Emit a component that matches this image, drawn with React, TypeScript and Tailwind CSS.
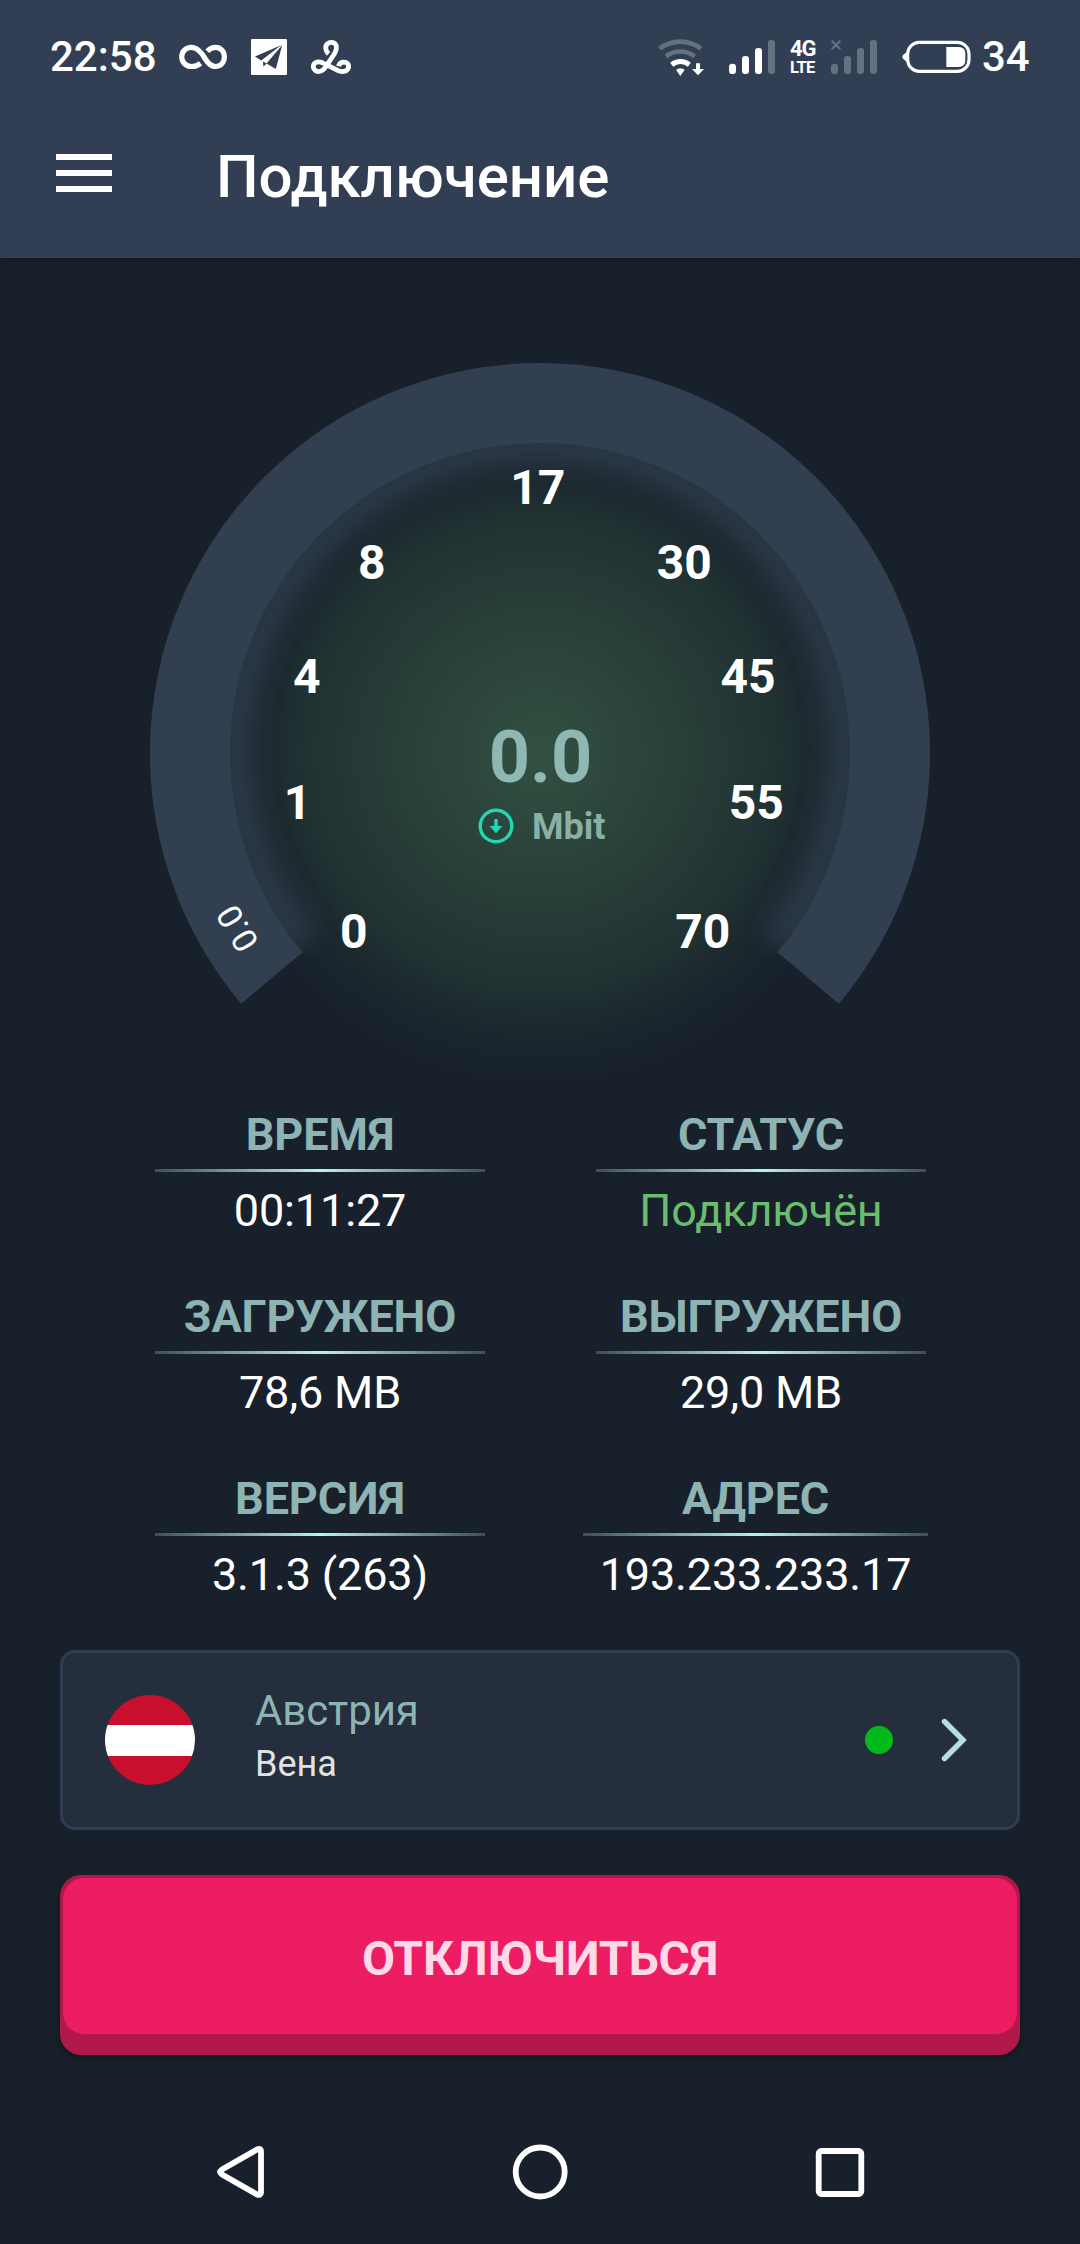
import React from "react";

function InfinityIcon() {
  return (
    <svg width="50" height="28" viewBox="178 44 50 28" fill="none" stroke="#fff" strokeWidth="5.2" strokeLinecap="butt">
      <path d="M200.5 64.3C197.5 67 194.5 67.5 191.5 67.5C185.5 67.5 181.7 63 181.7 57.8C181.7 52.5 185.8 48.3 191.5 48.3C196 48.3 199 51 202.5 55.5L205 59.5C208 64.5 211 67.5 215.5 67.5C221 67.5 224.4 63 224.4 57.8C224.4 52.3 220.5 48.3 215.5 48.3C211.8 48.3 209.3 50 207.3 52.3" />
    </svg>
  );
}

function TelegramIcon() {
  return (
    <svg width="36" height="36" viewBox="0 0 36 36">
      <rect width="36" height="36" rx="1.2" fill="#fff" />
      <path d="M30 6.2 4 17.6 10.2 21.5Z M31.2 6 15.5 24.6 24.8 30Z" fill="#313e53" />
      <path d="M12 22.6 12.4 27.5 15.8 24.4Z" fill="#313e53" />
    </svg>
  );
}

function KnotIcon() {
  return (
    <svg width="42" height="36" viewBox="310 39 42 36" fill="none" stroke="#fff" strokeWidth="4.8">
      <path d="M328.6 53.8C325.6 51.3 324.6 46.5 327.2 44C330 41.4 334.4 41.8 336 45C337.3 48 336 51 334.3 54L325.7 66.8C323.4 70.8 319.5 72.4 316.3 71C312.6 69.2 312.4 64.6 315.4 62.8C318.4 61 322 62.3 325 64L337.5 70.3C341.5 72.3 346.8 72 348.3 68.2C349.6 64.4 346.8 61.9 343.4 62.1C340.6 62.4 339 64 338.6 66.2" />
    </svg>
  );
}

function WifiIcon() {
  return (
    <svg width="50" height="44" viewBox="50 48 150 132" fill="none">
      <path d="M58 86A101 101 0 0 1 182 86" stroke="#64717f" strokeWidth="14" />
      <path d="M77 109A71 71 0 0 1 163 109" stroke="#64717f" strokeWidth="14" />
      <path d="M94 134A43 43 0 0 1 147 134" stroke="#fff" strokeWidth="15" />
      <path d="M107 149Q120 140 133 149L120 168Z" fill="#fff" />
      <path d="M167 130H179V147H191L173 166 155 147H167Z" fill="#fff" />
    </svg>
  );
}

function SignalIcon({ level, cross }: { level: number; cross?: boolean }) {
  const color = (i: number) => (i < level ? "#fff" : "#64717f");
  return (
    <svg width="48" height="36" viewBox="0 0 144 108" fill="none">
      <rect x="3" y="74" width="21" height="31" rx="10" fill={color(0)} />
      <rect x="42" y="51" width="21" height="54" rx="9" fill={color(1)} />
      <rect x="81" y="27" width="21" height="78" rx="9" fill={color(2)} />
      <rect x="120" y="3" width="21" height="102" rx="9" fill={color(3)} />
      {cross && <path d="M5 5 31 31M31 5 5 31" stroke="#64717f" strokeWidth="6.5" />}
    </svg>
  );
}

function BatteryIcon() {
  return (
    <svg width="70" height="34" viewBox="784 60 210 102" fill="none">
      <rect x="801" y="67" width="184" height="87" rx="35" stroke="#fff" strokeWidth="9.5" />
      <path d="M799 95 788 104Q782 110 788 117L799 126Z" fill="#fff" />
      <path d="M917 81H954Q974 81 974 101V121Q974 141 954 141H917Z" fill="#fff" />
    </svg>
  );
}

function StatusBar() {
  return (
    <div className="flex h-[114px] items-center pl-[50px] text-white">
      <span className="w-[106px] text-[42px] leading-[50px] font-medium whitespace-nowrap">22:58</span>
      <div className="ml-[22px]"><InfinityIcon /></div>
      <div className="ml-[23px]"><TelegramIcon /></div>
      <div className="ml-[23px]"><KnotIcon /></div>
      <div className="mt-[2px] ml-[305px]"><WifiIcon /></div>
      <div className="ml-[21px]"><SignalIcon level={3} /></div>
      <div className="ml-[14px] flex w-[26px] flex-col font-bold">
        <span className="text-[22px] leading-[21px] tracking-[-1.2px]">4G</span>
        <span className="text-[16.5px] leading-[17px] tracking-[-0.7px]">LTE</span>
      </div>
      <div className="ml-[14px]"><SignalIcon level={0} cross /></div>
      <div className="ml-[24px]"><BatteryIcon /></div>
      <span className="ml-[10px] text-[42px] leading-[50px] font-medium">34</span>
    </div>
  );
}

function Header() {
  return (
    <header className="h-[258px] bg-[#313e53] shadow-[0_2px_6px_rgba(0,0,0,0.3)]">
      <StatusBar />
      <div className="flex h-[118px] items-center pl-[56px]">
        <div className="flex w-[56px] flex-col gap-[10px]">
          <div className="h-[6px] bg-white" />
          <div className="h-[6px] bg-white" />
          <div className="h-[6px] bg-white" />
        </div>
        <h1 className="ml-[104px] pt-[7px] text-[60px] leading-[70px] font-medium text-white">Подключение</h1>
      </div>
    </header>
  );
}

const marks = [
  { x: 353.8, y: 947.5, t: "0" },
  { x: 297.5, y: 819, t: "1" },
  { x: 306.8, y: 693, t: "4" },
  { x: 371.8, y: 578.5, t: "8" },
  { x: 537.8, y: 504, t: "17" },
  { x: 684.3, y: 578.5, t: "30" },
  { x: 748, y: 693, t: "45" },
  { x: 756.3, y: 819, t: "55" },
  { x: 702.8, y: 947.5, t: "70" },
];

function Gauge() {
  return (
    <svg width="1080" height="842" viewBox="0 258 1080 842" className="block">
      <defs>
        <radialGradient id="glow" gradientUnits="userSpaceOnUse" cx="540" cy="753" r="345">
          <stop offset="0" stopColor="#325041" />
          <stop offset="0.35" stopColor="#2a4139" />
          <stop offset="0.7" stopColor="#203132" />
          <stop offset="1" stopColor="#18212b" stopOpacity="0" />
        </radialGradient>
        <filter id="soft" x="-20%" y="-20%" width="140%" height="140%">
          <feGaussianBlur stdDeviation="13" />
        </filter>
        <clipPath id="inner">
          <circle cx="540" cy="753" r="311" />
        </clipPath>
      </defs>
      <circle cx="540" cy="753" r="345" fill="url(#glow)" />
      <g clipPath="url(#inner)">
        <path
          d="M302 944A307 307 0 1 1 778 944"
          fill="none"
          stroke="#2d3a4a"
          strokeWidth="40"
          strokeOpacity="0.9"
          filter="url(#soft)"
        />
      </g>
      <path d="M271.9 978A350 350 0 1 1 808.1 978" fill="none" stroke="#323f51" strokeWidth="80" />
      <g fill="#fff" fontSize="48" fontWeight="700" textAnchor="middle">
        {marks.map((m) => (
          <text key={m.t} x={m.x} y={m.y}>{m.t}</text>
        ))}
      </g>
      <text transform="translate(237.2 928.5) rotate(-121)" y="12" fill="#fff" fontSize="34" textAnchor="middle">0.0</text>
      <text x="540.5" y="782" fill="#8fb7b3" fontSize="72" fontWeight="700" textAnchor="middle">0.0</text>
      <circle cx="496" cy="826" r="15.8" fill="none" stroke="#1fd8b4" strokeWidth="3.4" />
      <path d="M494.3 819H497.7V826H502.5L496 833.3 489.5 826H494.3Z" fill="#1fd8b4" />
      <text x="532" y="838.7" fill="#8ab0a6" fontSize="36" fontWeight="700">Mbit</text>
    </svg>
  );
}

function Stat({ label, value, className, valueClass = "text-white" }: { label: string; value: string; className: string; valueClass?: string }) {
  return (
    <div className={"flex flex-col items-center text-[45px] leading-[53px] tracking-[-0.15px] whitespace-nowrap " + className}>
      <span className="font-bold text-[#8db4b3]">{label}</span>
      <div className="mt-[8px] h-[3px] w-full bg-[linear-gradient(90deg,#3e4e5b,#b6f3f0_50%,#3e4e5b)]" />
      <span className={"mt-[12px] " + valueClass}>{value}</span>
    </div>
  );
}

function Stats() {
  return (
    <section className="pl-[155px]">
      <div className="flex h-[182px] pt-[8px]">
        <Stat label="ВРЕМЯ" value="00:11:27" className="w-[330px]" />
        <Stat label="СТАТУС" value="Подключён" className="ml-[111px] w-[330px]" valueClass="text-[#6bbd6e]" />
      </div>
      <div className="flex h-[182px] pt-[8px]">
        <Stat label="ЗАГРУЖЕНО" value="78,6 MB" className="w-[330px]" />
        <Stat label="ВЫГРУЖЕНО" value="29,0 MB" className="ml-[111px] w-[330px]" />
      </div>
      <div className="flex h-[182px] pt-[8px]">
        <Stat label="ВЕРСИЯ" value="3.1.3 (263)" className="w-[330px]" />
        <Stat label="АДРЕС" value="193.233.233.17" className="ml-[98px] w-[345px]" />
      </div>
    </section>
  );
}

function ServerCard() {
  return (
    <div className="mx-[60px] mt-[4px] flex h-[180px] items-center rounded-[15px] border-[3px] border-[#303c4f] bg-[#242e3c] pr-[50px] pl-[42px]">
      <div className="flex size-[90px] flex-col overflow-hidden rounded-full">
        <div className="flex-1 bg-[#c8102e]" />
        <div className="h-[31px] bg-white" />
        <div className="flex-1 bg-[#c8102e]" />
      </div>
      <div className="ml-[60px] flex flex-col pb-[10px]">
        <span className="text-[42px] leading-[50px] tracking-[-0.1px] text-[#8db4b3]">Австрия</span>
        <span className="mt-[7px] text-[36px] leading-[42px] text-[#e0e2e4]">Вена</span>
      </div>
      <div className="ml-auto size-[28px] rounded-full bg-[#00b91b]" />
      <svg width="26" height="44" viewBox="0 0 26 44" className="ml-[48px]" fill="none">
        <path d="M3.5 3.5 22 22 3.5 40.5" stroke="#b5dfde" strokeWidth="5.4" strokeLinecap="round" />
      </svg>
    </div>
  );
}

function DisconnectButton() {
  return (
    <button className="mx-[60px] mt-[45px] block h-[180px] w-[960px] rounded-[21px] bg-[#b0184a] px-[3px] pt-[3px] pb-[21px] shadow-[0_3px_6px_rgba(0,0,0,0.4)]">
      <span className="flex h-[156px] items-center justify-center rounded-[21px] bg-[#ec1d63] pt-[5px] text-[48px] leading-[56px] font-bold tracking-[-0.15px] text-[#ffd9e8]">
        ОТКЛЮЧИТЬСЯ
      </span>
    </button>
  );
}

function NavBar() {
  return (
    <nav className="flex h-[189px] items-start justify-between px-[210px] pt-[87px]">
      <svg width="60" height="60" viewBox="210 2142 60 60" fill="none" stroke="#fff" strokeWidth="5.8" strokeLinejoin="round">
        <path d="M220 2172Q220 2171 222 2169.5L257 2149.5Q261 2147.8 261 2151.5V2192.5Q261 2196 257 2194.5L222 2174.5Q220 2173 220 2172Z" />
      </svg>
      <svg width="60" height="60" viewBox="510 2142 60 60" fill="none" stroke="#fff" strokeWidth="5.8">
        <circle cx="540.2" cy="2172" r="24.5" />
      </svg>
      <svg width="60" height="60" viewBox="810 2142 60 60" fill="none" stroke="#fff" strokeWidth="5.8">
        <rect x="818.7" y="2151" width="42.6" height="43" rx="2.8" />
      </svg>
    </nav>
  );
}

export default function App() {
  return (
    <div className="h-[2244px] w-[1080px] overflow-hidden bg-[#18212b] font-['Roboto',sans-serif]">
      <Header />
      <Gauge />
      <Stats />
      <ServerCard />
      <DisconnectButton />
      <NavBar />
    </div>
  );
}
